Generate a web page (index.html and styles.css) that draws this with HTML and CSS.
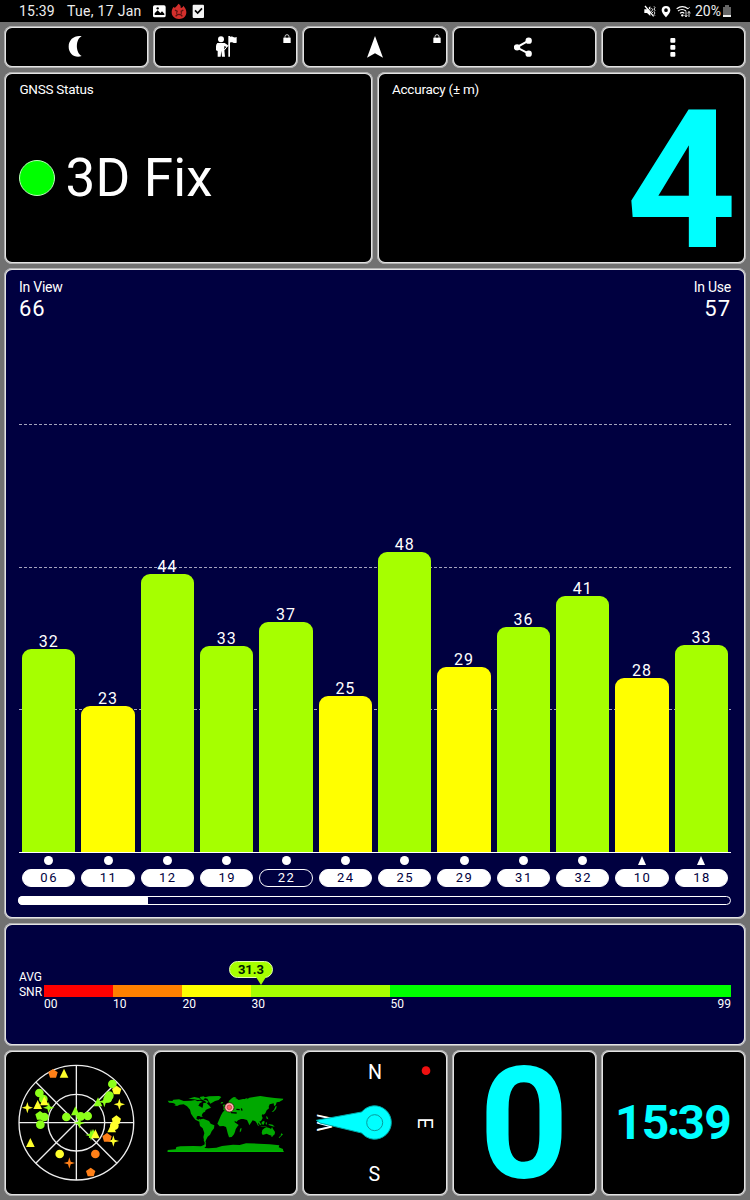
FILE: index.html
```
<!DOCTYPE html>
<html lang="en">
	<head>
		<meta charset="UTF-8">
		<title>GNSS Status</title>
		<link rel="stylesheet" href="styles.css">
	</head>
	<body>
		<div class="status">
			<span class="time">15:39</span>
			<span class="date">Tue, 17 Jan</span>
			<svg class="notes" width="53" height="18" viewBox="0 0 159 54">
				<rect x="3" y="10" width="38" height="36" rx="5" fill="#fff"/>
				<path d="M8 39V34l9-9 8 8 5-5 7 7v4z" fill="#000"/>
				<circle cx="17" cy="19" r="3.5" fill="#000"/>
				<path d="M64 15c4 3 6 3 7 0 2-3 6-5 8-10 7 4 8 8 7 13 5-1 7-3 8-7 6 7 9 13 9 20 0 13-9 20-22 20S59 43 59 31c0-7 2-11 5-16z" fill="#d32f2c"/>
				<path d="M69 24l8 5M94 24l-8 5M71 43c4-8 16-8 20 0M74 31v4M88 31v4" stroke="#5d1110" stroke-width="4" fill="none"/>
				<rect x="122" y="8" width="34" height="40" rx="3" fill="#f4f4f4"/>
				<path d="M129 25l8 8 13-14" stroke="#000" stroke-width="5" fill="none"/>
			</svg>
			<svg class="signals" width="49" height="18" viewBox="0 0 147 54">
				<path d="M1 22h8l10-9v29l-10-9H1z" fill="#fff"/>
				<path d="M6 11l25 30" stroke="#000" stroke-width="3"/>
				<path d="M3 12l26 31" stroke="#fff" stroke-width="4"/>
				<path d="M22 19l5 4-5 5 5 5M30 13l3 4-3 4 3 4-3 4 3 4-3 4 3 4" stroke="#ddd" stroke-width="3" fill="none"/>
				<path fill-rule="evenodd" d="M66 12c-8 0-13 5-13 12 0 9 13 22 13 22s13-13 13-22c0-7-5-12-13-12zm0 7a5.500 5.500 0 1 1 0 11 5.500 5.500 0 0 1 0-11z" fill="#fff"/>
				<path d="M98 20q17-12 34 0M102 27q12-9 24 0M108 34q7-6 13 0" stroke="#fff" stroke-width="3.500" fill="none"/>
				<circle cx="115" cy="40" r="3.500" fill="#fff"/>
				<path d="M126 28v16m-4-5l4 6 4-6M135 45V29m-4 5l4-6 4 6M132 20l5-4" stroke="#ddd" stroke-width="3" fill="none"/>
			</svg>
			<span class="percent">20%</span>
			<svg class="battery" width="8" height="12" viewBox="0 0 8 12">
				<path d="M0 2h2V0h4v2h2v10H0z" fill="#666"/>
				<path d="M0 10h8v2H0z" fill="#eee"/>
			</svg>
		</div>

		<div class="screen">
			<div class="row buttons">
				<div class="card">
					<svg width="20" height="24" viewBox="0 0 60 72"><path d="M44 4c-19 8-19 50 0 59C24 70 5 57 5 35S24 0 44 4z" fill="#fff"/></svg>
				</div>
				<div class="card">
					<svg width="24" height="24" viewBox="0 0 72 72" fill="#fff">
						<circle cx="21" cy="13" r="9"/>
						<path d="M10 24h22l10 7-3 6-8-4v12l2 20h-9l-2-18-2 18h-9V48l-5-2V34q0-6 4-10zM43 3h5v3c7-4 11 4 20 0v17c-9 4-13-4-20 0v42h-5z"/>
						<path d="M30 46l14-17" stroke="#fff" stroke-width="3"/>
					</svg>
					<svg class="lock" width="8" height="10" viewBox="0 0 24 30"><path d="M6 12V8q0-6 6-6t6 6v4" stroke="#ccc" stroke-width="3" fill="none"/><path d="M1 11h22v16H1z" fill="#fff"/></svg>
				</div>
				<div class="card">
					<svg width="20" height="24" viewBox="0 0 60 72"><path d="M30 3L54 68 30 55 6 68z" fill="#fff"/></svg>
					<svg class="lock" width="8" height="10" viewBox="0 0 24 30"><path d="M6 12V8q0-6 6-6t6 6v4" stroke="#ccc" stroke-width="3" fill="none"/><path d="M1 11h22v16H1z" fill="#fff"/></svg>
				</div>
				<div class="card">
					<svg width="20" height="24" viewBox="0 0 60 72" fill="#fff"><path d="M44 17L8 37l36 19" stroke="#fff" stroke-width="6" fill="none"/><circle cx="9" cy="37" r="9.500"/><circle cx="44" cy="17" r="9.500"/><circle cx="44" cy="56" r="9.500"/></svg>
				</div>
				<div class="card">
					<svg width="6" height="24" viewBox="0 0 18 72" fill="#fff"><rect x="1" y="9" width="15" height="14" rx="3"/><rect x="1" y="30" width="15" height="14" rx="3"/><rect x="1" y="51" width="15" height="14" rx="3"/></svg>
				</div>
			</div>

			<div class="row top">
				<div class="card fix">
					<div class="title">GNSS Status</div>
					<div class="state"><i class="led"></i>3D Fix</div>
				</div>
				<div class="card accuracy">
					<div class="title">Accuracy (± m)</div>
					<div class="big">4</div>
				</div>
			</div>

			<div class="card navy chart">
				<div class="head">
					<div>In View<b>66</b></div>
					<div class="right">In Use<b>57</b></div>
				</div>
				<div class="plot">
					<svg class="grid" width="712" height="428">
						<path d="M0 .5h712M0 143.500h712M0 285.500h712" stroke="#a4a4bd" stroke-dasharray="3 2"/>
					</svg>
					<div class="col"><span>32</span><div class="bar" style="height:203px"></div></div>
					<div class="col"><span>23</span><div class="bar yellow" style="height:146px"></div></div>
					<div class="col"><span>44</span><div class="bar" style="height:278px"></div></div>
					<div class="col"><span>33</span><div class="bar" style="height:206px"></div></div>
					<div class="col"><span>37</span><div class="bar" style="height:230px"></div></div>
					<div class="col"><span>25</span><div class="bar yellow" style="height:156px"></div></div>
					<div class="col"><span>48</span><div class="bar" style="height:300px"></div></div>
					<div class="col"><span>29</span><div class="bar yellow" style="height:185px"></div></div>
					<div class="col"><span>36</span><div class="bar" style="height:225px"></div></div>
					<div class="col"><span>41</span><div class="bar" style="height:256px"></div></div>
					<div class="col"><span>28</span><div class="bar yellow" style="height:174px"></div></div>
					<div class="col"><span>33</span><div class="bar" style="height:207px"></div></div>
				</div>
				<div class="sats">
					<div><i class="dot"></i><span>06</span></div>
					<div><i class="dot"></i><span>11</span></div>
					<div><i class="dot"></i><span>12</span></div>
					<div><i class="dot"></i><span>19</span></div>
					<div><i class="dot"></i><span class="unused">22</span></div>
					<div><i class="dot"></i><span>24</span></div>
					<div><i class="dot"></i><span>25</span></div>
					<div><i class="dot"></i><span>29</span></div>
					<div><i class="dot"></i><span>31</span></div>
					<div><i class="dot"></i><span>32</span></div>
					<div><i class="tri"></i><span>10</span></div>
					<div><i class="tri"></i><span>18</span></div>
				</div>
				<div class="scroll"><div></div></div>
			</div>

			<div class="card navy snr">
				<div class="name">AVG<br>SNR</div>
				<div class="scale">
					<div class="bubble">31.3</div>
					<div class="seg red">00</div>
					<div class="seg orange">10</div>
					<div class="seg yellow">20</div>
					<div class="seg lime">30</div>
					<div class="seg green">50<span>99</span></div>
				</div>
			</div>

			<div class="row bottom">
				<div class="card">
					<svg viewBox="13 15 435 438">
						<defs>
							<path id="t" d="M0-14L13 13H-13z"/>
							<path id="s" d="M0-17L4-4 17 0 4 4 0 17-4 4-17 0-4-4z"/>
							<path id="p" d="M0-14L14-4 9 12H-9L-14-4z"/>
							<circle id="c" r="13"/>
						</defs>
						<g stroke="#eee" stroke-width="4" fill="none">
							<circle cx="230" cy="233" r="172"/>
							<circle cx="230" cy="233" r="85"/>
							<path d="M230 61v344M58 233h344M109 112l242 242M351 112L109 354"/>
						</g>
						<g class="sky-green">
							<use href="#c" x="119" y="144"/><use href="#c" x="131" y="162"/><use href="#s" x="147" y="188"/>
							<use href="#p" x="121" y="212"/><use href="#c" x="134" y="216"/><use href="#c" x="122" y="239"/>
							<use href="#c" x="200" y="216"/><use href="#t" x="227" y="198"/><use href="#c" x="243" y="214"/>
							<use href="#c" x="264" y="213"/><use href="#s" x="239" y="234"/><use href="#t" x="295" y="171"/>
							<use href="#s" x="314" y="170"/><use href="#c" x="325" y="160"/><use href="#c" x="329" y="152"/>
							<use href="#c" x="338" y="117"/><use href="#s" x="274" y="270"/><use href="#t" x="280" y="266"/>
						</g>
						<g class="sky-yellow">
							<use href="#t" x="193" y="85"/><use href="#t" x="134" y="168"/><use href="#t" x="114" y="179"/>
							<use href="#s" x="83" y="188"/><use href="#t" x="92" y="293"/><use href="#c" x="180" y="327"/>
							<use href="#p" x="351" y="136"/><use href="#s" x="359" y="178"/><use href="#p" x="350" y="225"/>
							<use href="#c" x="344" y="242"/><use href="#t" x="336" y="249"/><use href="#s" x="341" y="288"/>
							<use href="#t" x="287" y="267"/>
						</g>
						<g class="sky-orange">
							<use href="#p" x="160" y="86"/><use href="#p" x="322" y="278"/><use href="#c" x="287" y="327"/>
							<use href="#p" x="273" y="382"/><use href="#s" x="209" y="354"/>
						</g>
					</svg>
				</div>
				<div class="card">
					<svg viewBox="10 15 435 438">
						<g fill="#00a800">
							<path d="M54 167l14 1 3-4 17-1 14 5 22-1 12-2 8 4 7-2 8 3-9 5-4 7 7 3 5 4 2-7 1-8 9-1 9 9 5 6-10 4-6 3-2 5-6 3-4 8 2 5-7-4-9 2-2 7 6 3 5-3 1 8 8 4 6 4-5 1-12-8-12-6-7-9-6-9-3-12-9-10-10-6-12 1-8 4-8-2 4-3-8-4-12-1z"/>
							<path d="M116 161l18-5 14 3 6 5-10 1-12-2zM150 156l12-2 5 4-6 6 10 2 6 5-6 4-5-7-12-5zM160 158l18-4 30-1 7 3-8 9-11 3-14 8-5-7-4-8-12-3z"/>
							<path d="M152 223l9-2 17 7 5 8 11 5-1 9-7 9-5 10-7 6-4 8-3 7 3 5-6-3-3-16 3-12-5-14-8-7-2-10z"/>
							<path d="M214 211l6-11 5-3-4-3 1-9 8 1-2-6 7-4 3-9 10-9 11 2 8 5 13-3 12 1 7-5 18-3 15-2 19 3 24 3 26 2-2 4-6 3-3 2-9 2-3 9-5 2-1-8-12 3-3 7 1 5-7 6-4 9-5 4-3-2-3 5 3 7-5 9-8 3-1 6 4 7-5-3-3-7-4-5-8-3-7 10-3 5-3-8-4-8-11-3-7 0-9 4-5 5-5-4 0 5 12 8-5 6-4 7-2 7-3 8-7 8-8 1-4-12-3-12-2-7-8-3-11 1-7-8z"/>
							<path d="M271 251l5-2-2 10-4 3zM219 181l5-4 2 7-5 1zM214 172l7-1-2 4-6 1z"/>
							<path d="M378 183l3 1-2 8-8 8-5 1 7-7zM349 214l4 1 3 8-5-2zM322 225l8 6 5 8-4 1-8-10zM336 231l7-4 2 4-3 8-6-1zM348 233l3-2 1 8-4-2zM357 237l12 2 6 6-7-1-11-4zM332 242l19 3 0 2-18-3z"/>
							<path d="M338 255l6-5 6-3 9 2 5 3 3-6 3 6 6 9-1 7-6 5-10-3-8-4-12 4-3-6zM365 272l4 0-1 4-3-1zM394 265l6 3-6 6-5 5-2-2 6-5zM249 157l11-1-7 5zM286 161l8-2-4 6-7 3zM139 207l14 4 7 3-7 1-10-5z"/>
							<path d="M54 320v-5l24-2 2-7 12-2 39-1 23 1 10-5 2-9-5-4 4-1 3 9 1 10-5 5 13 1 23-2 17-5 33-4 20 1 19-5 38 1 33 2 29 3-2 6 13 5v8z"/>
						</g>
						<path d="M54 319h348" stroke="#00b400" stroke-width="4"/>
						<path d="M244 203l17 1M260 193l10 1M275 190l2 7" stroke="#000" stroke-width="4"/>
						<circle cx="239" cy="187" r="14" fill="#ffb0b0" stroke="#200" stroke-width="2"/>
						<circle cx="239" cy="187" r="7" fill="#ff6065" stroke="#9d3b3d" stroke-width="2"/>
					</svg>
				</div>
				<div class="card">
					<svg class="compass" viewBox="7 15 435 438">
						<text x="226" y="102">N</text>
						<text x="224" y="407">S</text>
						<text transform="translate(356 234) rotate(90)">E</text>
						<text transform="translate(96 233) rotate(-90)">W</text>
						<circle cx="379" cy="77" r="13" fill="#f01010"/>
						<path d="M50 226L186 201A50 50 0 1 1 186 264L61 234z" fill="#0ff" stroke="#0aa" stroke-width="3"/>
						<circle cx="225" cy="233" r="24" fill="none" stroke="#0a9a9a" stroke-width="3"/>
					</svg>
				</div>
				<div class="card speed">0</div>
				<div class="card clock">15<i>:</i>39</div>
			</div>
		</div>
	</body>
</html>
```
FILE: styles.css
```
* {
	margin: 0;
	padding: 0;
	box-sizing: border-box;
}

body {
	width: 750px;
	height: 1200px;
	overflow: hidden;
	background: #717171;
	color: #fff;
	font-family: Roboto, "Liberation Sans", sans-serif;
}

i {
	font-style: normal;
}

.status {
	display: flex;
	align-items: center;
	height: 22px;
	padding: 0 19px;
	background: #000;
	font-size: 14px;
	color: #eee;
}

.time {
	width: 48px;
	letter-spacing: .2px;
}

.date {
	width: 85px;
	letter-spacing: .3px;
}

.signals {
	margin-left: auto;
	margin-right: 2px;
}

.percent {
	width: 28px;
	white-space: nowrap;
}

.screen {
	display: flex;
	flex-direction: column;
	gap: 4px;
	padding: 4px 4.4px;
}

.row {
	display: flex;
	gap: 4px;
}

.row .card {
	flex: 1 1 0;
	min-width: 0;
}

.card {
	position: relative;
	background: #000;
	border-radius: 8px;
	box-shadow: inset 0 0 0 1px #b0b0b0, inset 0 0 0 2px #e4e4e4;
}

.navy {
	background: #000040;
}

.buttons .card {
	display: flex;
	align-items: center;
	justify-content: center;
	height: 42px;
}

.lock {
	position: absolute;
	top: 8px;
	right: 7px;
}

.top .card {
	height: 192px;
	padding: 9px 14px 0 15px;
}

.title {
	font-size: 13.5px;
	line-height: 16px;
	letter-spacing: -.25px;
}

.state {
	display: flex;
	align-items: center;
	height: 64px;
	margin-top: 49px;
	font-size: 53px;
	letter-spacing: .2px;
}

.led {
	width: 36px;
	height: 36px;
	margin-right: 10px;
	border: 1.5px solid #b8ffb8;
	border-radius: 50%;
	background: #0f0;
}

.big {
	margin-top: 16px;
	margin-right: -5px;
	text-align: right;
	font-size: 193px;
	line-height: 136px;
	font-weight: bold;
	color: #0ff;
}

.chart {
	height: 651px;
	padding: 11px 14.6px 0 14.6px;
}

.head {
	display: flex;
	justify-content: space-between;
	height: 45px;
	font-size: 14px;
	line-height: 17px;
	letter-spacing: -.25px;
}

.head b {
	display: block;
	font-size: 22px;
	line-height: 26px;
	font-weight: normal;
	letter-spacing: 1px;
}

.right {
	text-align: right;
}

.plot {
	position: relative;
	display: flex;
	align-items: flex-end;
	height: 529px;
	border-bottom: 1px solid #fff;
}

.grid {
	position: absolute;
	left: 0;
	bottom: 0;
}

.col {
	position: relative;
	flex: 1;
	padding: 0 3px;
	text-align: center;
}

.col span {
	display: block;
	font-size: 16px;
	line-height: 14px;
	letter-spacing: 1px;
}

.bar {
	border-radius: 9px 9px 0 0;
	background: #a6ff00;
}

.bar.yellow {
	background: #ff0;
}

.sats {
	display: flex;
	padding-top: 3px;
}

.sats div {
	flex: 1;
	padding: 0 3px;
}

.dot {
	display: block;
	width: 9px;
	height: 9px;
	margin: 0 auto 4px;
	border-radius: 50%;
	background: #fff;
}

.tri {
	display: block;
	width: 0;
	margin: 0 auto 4px;
	border: solid transparent;
	border-width: 0 4.5px 9px;
	border-bottom-color: #fff;
}

.sats span {
	display: block;
	height: 18px;
	border: 1px solid #fff;
	border-radius: 9px;
	background: #fff;
	text-align: center;
	font-size: 13px;
	line-height: 16px;
	letter-spacing: 1.500px;
	text-indent: 1px;
	color: #000040;
}

.sats .unused {
	background: none;
	color: #fff;
}

.scroll {
	width: 713px;
	height: 9px;
	margin: 9px 0 0 -1px;
	border: 1.5px solid #fff;
	border-radius: 5px;
}

.scroll div {
	width: 130px;
	height: 9px;
	margin: -1px;
	border-radius: 5px 2px 2px 5px;
	background: #fff;
}

.snr {
	display: flex;
	height: 123px;
	padding: 47px 14.6px 0 14.6px;
}

.name {
	width: 25px;
	font-size: 12px;
	line-height: 14.500px;
}

.scale {
	position: relative;
	flex: 1;
	display: grid;
	grid-template-columns: 69px 69.500px 69px 139px 1fr;
	margin-top: 15px;
}

.seg {
	display: flex;
	justify-content: space-between;
	height: 26px;
	border-top: 12px solid;
	font-size: 12px;
	line-height: 14px;
}

.seg.red {
	border-color: #f00;
}

.seg.orange {
	border-color: #ff8000;
}

.seg.yellow {
	border-color: #ff0;
}

.seg.lime {
	border-color: #a6ff00;
}

.seg.green {
	border-color: #0f0;
}

.bubble {
	position: absolute;
	left: 185px;
	top: -24px;
	width: 44px;
	height: 17px;
	border: 1px solid #e3ffad;
	border-radius: 9px;
	background: #a6ff00;
	text-align: center;
	font-size: 13px;
	line-height: 15px;
	font-weight: bold;
	color: #002000;
}

.bubble::after {
	content: "";
	position: absolute;
	left: 26px;
	top: 15px;
	border: solid transparent;
	border-width: 8px 5px 0;
	border-top-color: #a6ff00;
}

.bottom .card {
	height: 146px;
}

.bottom svg {
	display: block;
	width: 100%;
	height: 100%;
}

.sky-green {
	fill: #8cff1a;
}

.sky-yellow {
	fill: #ffff2b;
}

.sky-orange {
	fill: #ff8018;
}

.compass text {
	font-size: 59px;
	text-anchor: middle;
	fill: #fff;
}

.speed {
	text-align: center;
	font-size: 156px;
	line-height: 147px;
	font-weight: bold;
	color: #0ff;
}

.clock {
	text-align: center;
	font-size: 48px;
	line-height: 146px;
	font-weight: bold;
	letter-spacing: -.7px;
	color: #0ff;
}

.clock i {
	position: relative;
	top: -4px;
	margin: 0 -2px;
}
```
